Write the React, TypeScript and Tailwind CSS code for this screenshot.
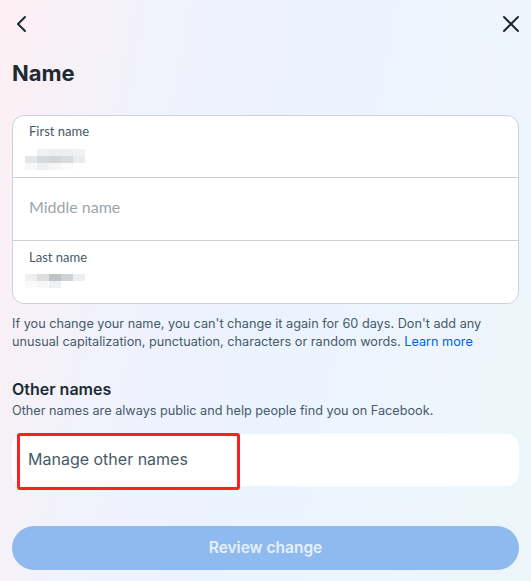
import React from "react";

function Blur({ cells }: { cells: string[][] }) {
  return (
    <div className="flex flex-col">
      {cells.map((row, i) => (
        <div key={i} className="flex">
          {row.map((c, j) => (
            <div key={j} className="w-[12px] h-[7px]" style={{ background: c }} />
          ))}
        </div>
      ))}
    </div>
  );
}

export default function App() {
  const first = [
    ["#ffffff", "#f1f2f3", "#eceeef", "#eceeef", "#f0f1f2"],
    ["#e4e6e8", "#d6d9dc", "#d3d6d9", "#d9dbde", "#eaebec"],
    ["#f6f7f7", "#eef0f1", "#f6f6f7", "#fafafa", "#ffffff"],
  ];
  const last = [
    ["#ffffff", "#eeeff0", "#dcdee0", "#bfc3c7", "#cfd2d5", "#eceeef"],
    ["#ffffff", "#fafafa", "#f7f7f8", "#eef0f1", "#ffffff", "#ffffff"],
  ];
  return (
    <div
      className="w-[531px] h-[581px] overflow-hidden flex flex-col px-[12px] bg-[linear-gradient(100deg,#fdf0f3_0%,#f1f2fc_25%,#ebf3fd_50%,#eef5fd_80%,#ecf6f8_100%)]"
      style={{ fontFamily: "Inter, 'Liberation Sans', sans-serif" }}
    >
      <div className="flex justify-between items-center h-[48px]">
        <svg width="14" height="18" viewBox="0 0 14 18" className="ml-[2px]">
          <path d="M11 2 L4 9 L11 16" fill="none" stroke="#1c2b33" strokeWidth="2" strokeLinecap="round" strokeLinejoin="round" />
        </svg>
        <svg width="20" height="20" viewBox="0 0 20 20" className="mr-[-2px]">
          <path d="M3 3 L17 17 M17 3 L3 17" fill="none" stroke="#1c2b33" strokeWidth="2" strokeLinecap="round" />
        </svg>
      </div>
      <div className="text-[22px] font-bold text-[#1c2b33] leading-[28px] mt-[11px]">Name</div>
      <div
        className="mt-[28px] bg-white rounded-[12px] border border-[#cbd2d9] flex flex-col"
        style={{ fontFamily: "Lato, 'Liberation Sans', sans-serif" }}
      >
        <div className="h-[62px] border-b border-[#cbd2d9] pl-[16px] pt-[7px] relative">
          <div className="text-[13px] text-[#465a69] leading-[16px]">First name</div>
          <div className="absolute left-[12px] top-[33px]">
            <Blur cells={first} />
          </div>
        </div>
        <div className="h-[63px] border-b border-[#cbd2d9] pl-[16px] flex items-center">
          <div className="text-[16px] text-[#9ea4a9] leading-[20px] mt-[-4px]">Middle name</div>
        </div>
        <div className="h-[62px] pl-[16px] pt-[8px] relative">
          <div className="text-[13px] text-[#465a69] leading-[16px]">Last name</div>
          <div className="absolute left-[0px] top-[33px]">
            <Blur cells={last} />
          </div>
        </div>
      </div>
      <div className="text-[12.7px] leading-[18px] text-[#465a69] mt-[11px]">
        If you change your name, you can't change it again for 60 days. Don't add any unusual capitalization, punctuation, characters or random words.{" "}
        <span className="text-[#0064e0]">Learn more</span>
      </div>
      <div className="text-[16px] font-semibold text-[#1c2b33] leading-[20px] mt-[28px]">Other names</div>
      <div className="text-[12.7px] leading-[18px] text-[#465a69] mt-[3px]">
        Other names are always public and help people find you on Facebook.
      </div>
      <div className="mt-[14px] bg-white rounded-[12px] h-[52px] relative flex items-center">
        <div className="absolute left-[5px] top-[-1px] w-[223px] h-[57px] border-[3px] border-[#ff1f1f] rounded-[3px]" />
        <div className="pl-[16px] text-[16px] text-[#465a69] mt-[-2px]">Manage other names</div>
      </div>
      <div className="mt-[40px] h-[44px] rounded-full bg-[#8fbaf0] flex items-center justify-center text-[15.5px] font-semibold text-[#e6f0fc]">
        Review change
      </div>
    </div>
  );
}
